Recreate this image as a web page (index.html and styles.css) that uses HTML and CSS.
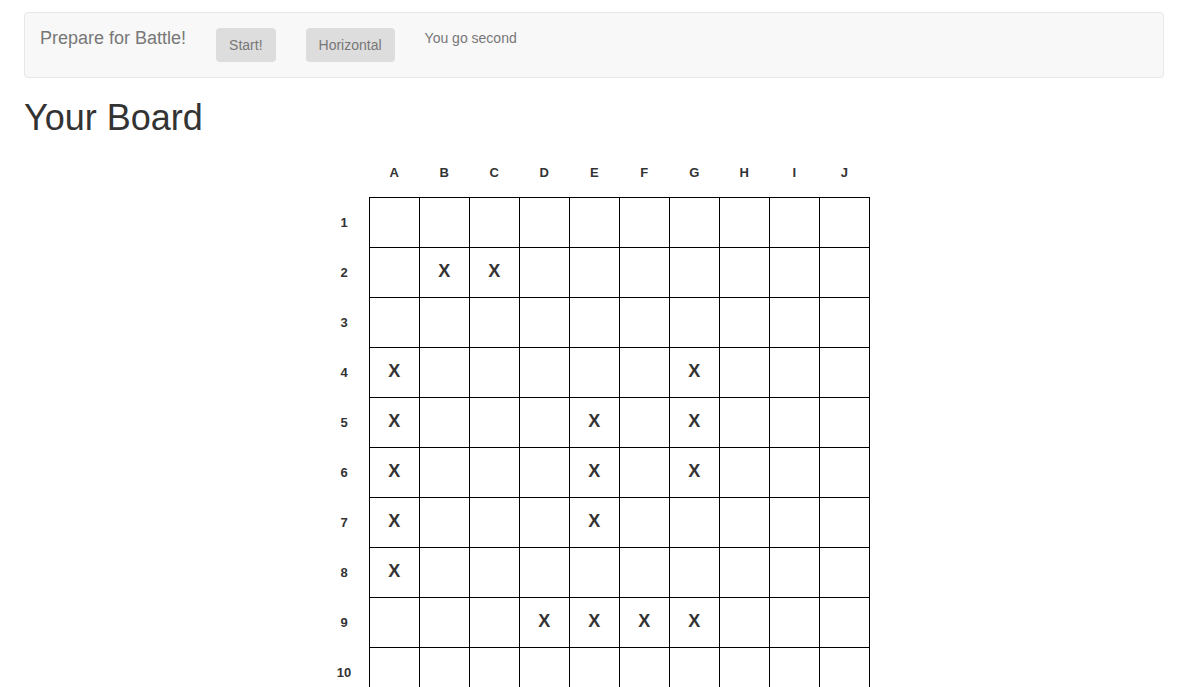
FILE: index.html
```html
<!DOCTYPE html>
<html>
<head>
<meta charset="utf-8">
<link rel="stylesheet" href="styles.css">
</head>
<body>
<div class="container">
  <nav class="navbar">
    <span class="brand">Prepare for Battle!</span>
    <div class="nav-form">
      <button class="btn">Start!</button>
      <button class="btn">Horizontal</button>
    </div>
    <span class="nav-text">You go second</span>
  </nav>
  <h1 class="title">Your Board</h1>
  <table class="board">
    <thead>
      <tr><th></th><th>A</th><th>B</th><th>C</th><th>D</th><th>E</th><th>F</th><th>G</th><th>H</th><th>I</th><th>J</th></tr>
    </thead>
    <tbody>
      <tr><th>1</th><td></td><td></td><td></td><td></td><td></td><td></td><td></td><td></td><td></td><td></td></tr>
      <tr><th>2</th><td></td><td>X</td><td>X</td><td></td><td></td><td></td><td></td><td></td><td></td><td></td></tr>
      <tr><th>3</th><td></td><td></td><td></td><td></td><td></td><td></td><td></td><td></td><td></td><td></td></tr>
      <tr><th>4</th><td>X</td><td></td><td></td><td></td><td></td><td></td><td>X</td><td></td><td></td><td></td></tr>
      <tr><th>5</th><td>X</td><td></td><td></td><td></td><td>X</td><td></td><td>X</td><td></td><td></td><td></td></tr>
      <tr><th>6</th><td>X</td><td></td><td></td><td></td><td>X</td><td></td><td>X</td><td></td><td></td><td></td></tr>
      <tr><th>7</th><td>X</td><td></td><td></td><td></td><td>X</td><td></td><td></td><td></td><td></td><td></td></tr>
      <tr><th>8</th><td>X</td><td></td><td></td><td></td><td></td><td></td><td></td><td></td><td></td><td></td></tr>
      <tr><th>9</th><td></td><td></td><td></td><td>X</td><td>X</td><td>X</td><td>X</td><td></td><td></td><td></td></tr>
      <tr><th>10</th><td></td><td></td><td></td><td></td><td></td><td></td><td></td><td></td><td></td><td></td></tr>
    </tbody>
  </table>
</div>
</body>
</html>
```
FILE: styles.css
```css
html, body {
  margin: 0;
  padding: 0;
  background: #fff;
  font-family: "Liberation Sans", Arial, sans-serif;
  font-size: 14px;
  line-height: 1.42857;
  color: #333;
}
.container {
  padding: 12px 18px 0 24px;
}
.navbar {
  display: flex;
  align-items: flex-start;
  height: 64px;
  background: #f8f8f8;
  border: 1px solid #e7e7e7;
  border-radius: 4px;
  margin-bottom: 20px;
}
.brand {
  padding: 15px;
  font-size: 18px;
  line-height: 20px;
  color: #777;
}
.nav-form {
  display: flex;
  gap: 30px;
  padding: 15px 15px 0 15px;
}
.btn {
  font-family: "Liberation Sans", Arial, sans-serif;
  font-size: 14px;
  line-height: 20px;
  height: 34px;
  padding: 0 13px;
  border: 0;
  border-radius: 4px;
  background: #dddddd;
  color: #777;
}
.nav-text {
  margin: 15px 0 0 15px;
  line-height: 20px;
  color: #777;
}
.title {
  margin: 20px 0 10px;
  font-size: 36px;
  font-weight: 500;
  line-height: 1.1;
  color: #333;
}
.board {
  border-collapse: collapse;
  margin: 0 auto;
  transform: translateX(1px);
}
.board th, .board td {
  width: 50px;
  height: 50px;
  padding: 0 1px 1px 0;
  text-align: center;
  vertical-align: middle;
  box-sizing: border-box;
}
.board th {
  padding: 1px 1px 0 0;
  font-size: 13px;
  font-weight: bold;
  color: #333;
}
.board td {
  border: 1px solid #000;
  font-size: 18px;
  font-weight: bold;
  color: #333;
}
```
